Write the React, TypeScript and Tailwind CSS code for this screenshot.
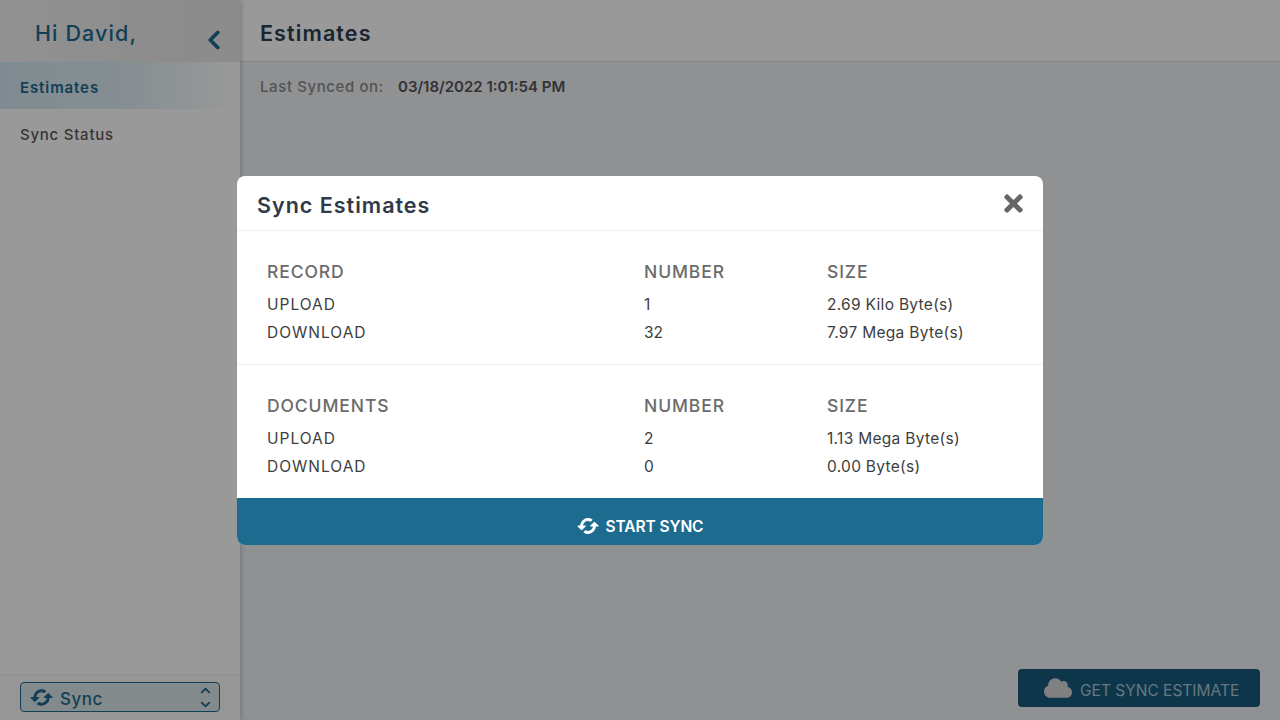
import React from 'react';
import { FaTimes, FaCloud } from 'react-icons/fa';
import { ChevronLeft, ChevronUp, ChevronDown } from 'lucide-react';

const font = { fontFamily: 'Inter, "Open Sans", sans-serif' };

function SyncIcon({ size }: { size: number }) {
  return (
    <svg width={size} height={size} viewBox="0 0 24 24" fill="currentColor" stroke="currentColor" strokeWidth={1.2} strokeLinejoin="round">
      <path d="M19 8l-4 4h3c0 3.31-2.69 6-6 6-1.01 0-1.97-.25-2.8-.7l-1.46 1.46C8.97 19.54 10.43 20 12 20c4.42 0 8-3.58 8-8h3l-4-4zM6 12c0-3.31 2.69-6 6-6 1.01 0 1.97.25 2.8.7l1.46-1.46C15.03 4.46 13.57 4 12 4c-4.42 0-8 3.58-8 8H1l4 4 4-4H6z" />
    </svg>
  );
}

function SyncTable({ title, rows }: { title: string; rows: string[][] }) {
  return (
    <div className="px-[30px] pt-[24px] pb-[18px]">
      <div className="grid grid-cols-[377px_183px_1fr] h-[32px] pt-[2px] mb-[3px] items-center text-[17.5px] font-medium tracking-[0.9px] text-[#6b6b6b]">
        <span>{title}</span>
        <span>NUMBER</span>
        <span>SIZE</span>
      </div>
      {rows.map((r) => (
        <div key={r[0]} className="grid grid-cols-[377px_183px_1fr] h-[28px] items-center text-[15.5px] text-[#3d3d3d]">
          <span className="tracking-[1px]">{r[0]}</span>
          <span>{r[1]}</span>
          <span className="tracking-[0.3px]">{r[2]}</span>
        </div>
      ))}
    </div>
  );
}

export default function App() {
  return (
    <div className="relative w-[1280px] h-[720px] overflow-hidden flex bg-white" style={font}>
      {/* Sidebar */}
      <aside className="w-[240px] h-full flex flex-col bg-white shadow-[2px_0_4px_rgba(0,0,0,0.15)] z-10">
        <div className="h-[62px] flex bg-gradient-to-r from-[#f2f2f2] to-[#e8e8e8]">
          <div className="flex-1 pl-[35px] pt-[18px] text-[21.5px] leading-[30px] font-medium tracking-[1.1px] text-[#1f6a90]">Hi David,</div>
          <ChevronLeft className="mr-[11px] mt-[25px] text-[#1f6a90]" size={30} strokeWidth={3} />
        </div>
        <div className="h-[47px] flex items-center pl-[20px] pt-[6px] text-[15px] font-semibold tracking-[0.9px] text-[#1f6a90] bg-gradient-to-r from-[#d5e8f2] via-[#deedf4] to-white">
          Estimates
        </div>
        <div className="h-[50px] flex items-center pl-[20px] pt-[3px] text-[15px] font-medium tracking-[0.75px] text-[#5a5a5a]">Sync Status</div>
        <div className="mt-auto h-[46px] flex items-start px-[20px] pt-[7px] bg-[#fafafa] border-t border-[#f0f0f0]">
          <div className="w-[200px] h-[30px] rounded-[4px] border border-[#1f6a90] bg-[#dbe6ea] flex items-center pl-[9px] pr-[6px] text-[#1f6a90]">
            <SyncIcon size={23} />
            <span className="ml-[7px] pt-[5px] text-[17px] font-medium tracking-[0.5px] flex-1">Sync</span>
            <div className="flex flex-col -space-y-[1px]">
              <ChevronUp size={15} strokeWidth={3} />
              <ChevronDown size={15} strokeWidth={3} />
            </div>
          </div>
        </div>
      </aside>

      {/* Main */}
      <main className="flex-1 h-full flex flex-col bg-[#f0f2f5]">
        <header className="h-[62px] flex items-center pl-[20px] pt-[6px] bg-white border-b border-[#dddddd] text-[21.5px] font-semibold tracking-[1.1px] text-[#2c3e50]">
          Estimates
        </header>
        <div className="flex items-center pl-[20px] pt-[14px] text-[15px]">
          <span className="w-[138px] font-medium tracking-[0.6px] text-[#8a8a8a]">Last Synced on:</span>
          <span className="font-semibold text-[#555555]">03/18/2022 1:01:54 PM</span>
        </div>
        <div className="mt-auto flex justify-end pr-[20px] pb-[13px]">
          <button className="w-[242px] h-[38px] rounded-[4px] bg-[#185a7d] flex items-center pl-[26px] text-[#a9c6d6] text-[15.5px]">
            <FaCloud size={28} className="text-[#d5d5d5]" />
            <span className="ml-[8px] pt-[5px]">GET SYNC ESTIMATE</span>
          </button>
        </div>
      </main>

      {/* Overlay */}
      <div className="absolute inset-0 z-20 bg-black/40 flex items-start justify-center pt-[176px]">
        <div className="w-[806px] h-[369px] rounded-[8px] bg-white overflow-hidden flex flex-col">
          <div className="h-[56px] flex items-center justify-between pl-[20px] pr-[16px] border-b border-[#eeeeee]">
            <span className="pt-[3px] text-[21.5px] font-semibold tracking-[1px] text-[#2f3a4a]">Sync Estimates</span>
            <FaTimes size={27} className="text-[#666666]" />
          </div>
          <SyncTable
            title="RECORD"
            rows={[
              ['UPLOAD', '1', '2.69 Kilo Byte(s)'],
              ['DOWNLOAD', '32', '7.97 Mega Byte(s)'],
            ]}
          />
          <div className="border-t border-[#eeeeee]">
            <SyncTable
              title="DOCUMENTS"
              rows={[
                ['UPLOAD', '2', '1.13 Mega Byte(s)'],
                ['DOWNLOAD', '0', '0.00 Byte(s)'],
              ]}
            />
          </div>
          <div className="mt-auto h-[47px] pt-[9px] bg-[#1e6b90] flex items-center justify-center text-white text-[15.5px] font-semibold">
            <SyncIcon size={22} />
            <span className="ml-[7px] tracking-[-0.1px]">START SYNC</span>
          </div>
        </div>
      </div>
    </div>
  );
}
